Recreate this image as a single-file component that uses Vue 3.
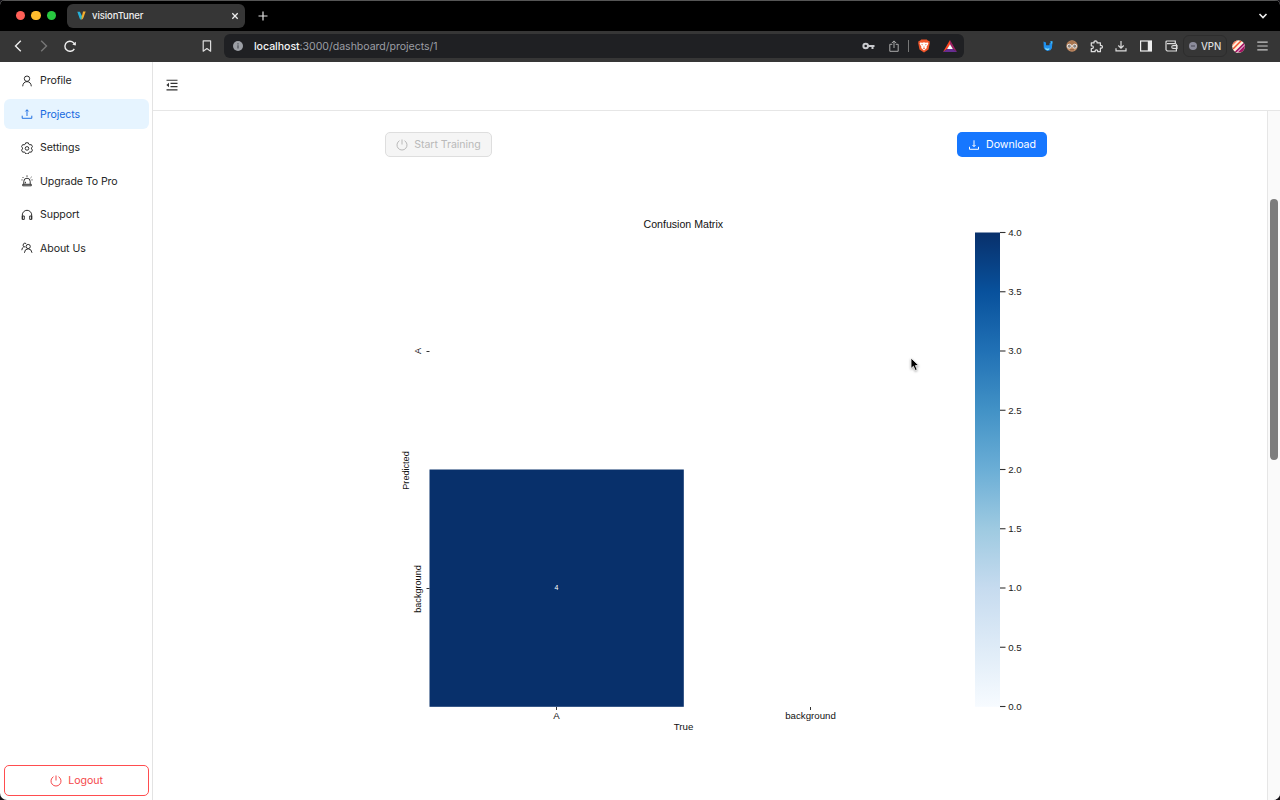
<script setup>
const menu = [
  { label: 'Profile', icon: 'user' },
  { label: 'Projects', icon: 'upload', active: true },
  { label: 'Settings', icon: 'gear' },
  { label: 'Upgrade To Pro', icon: 'alert' },
  { label: 'Support', icon: 'headset' },
  { label: 'About Us', icon: 'team' },
]
const ticks = Array.from({ length: 9 }, (_, i) => ({
  label: (4 - i * 0.5).toFixed(1),
  y: 232.5 + i * 59.25,
}))
const blues = ['#08306b', '#08519c', '#2171b5', '#4292c6', '#6baed6', '#9ecae1', '#c6dbef', '#deebf7', '#f7fbff']
</script>

<template>
  <div class="window">
    <header class="tabs">
      <div class="lights"><i class="red"></i><i class="amber"></i><i class="green"></i></div>
      <div class="tab">
        <svg class="logo" width="9" height="9" viewBox="0 0 9 9"><path d="M.3.8h2.6L5 5.2 4.2 8.6Q3.2 8.8 2.7 7.5Z" fill="#25b0d8"/><path d="M6 .5h2.7L6.3 7Q5.6 8.6 4.2 8.6Z" fill="#f5ae2d"/><path d="M3.7 5.3 5 4.6l.3 2.2-1.1 1.8z" fill="#68b98a"/></svg>
        <span>visionTuner</span>
        <svg class="close" width="8" height="8" viewBox="0 0 8 8" stroke="#eee" stroke-width="1.3"><path d="m1.3 1.3 5.4 5.4m0-5.4L1.3 6.7"/></svg>
      </div>
      <svg class="plus" width="10" height="10" viewBox="0 0 10 10" stroke="#e4e4e4" stroke-width="1.2"><path d="M5 .5v9M.5 5h9"/></svg>
      <svg class="chev" width="10" height="8" viewBox="0 0 10 8" fill="none" stroke="#eee" stroke-width="1.6"><path d="m1.5 2 3.5 3.5L8.5 2"/></svg>
    </header>

    <nav class="toolbar">
      <div class="history">
        <svg width="8" height="12" viewBox="0 0 8 12" fill="none" stroke="#eee" stroke-width="1.4"><path d="M6.8.8 1.5 6l5.3 5.2"/></svg>
        <svg width="8" height="12" viewBox="0 0 8 12" fill="none" stroke="#777" stroke-width="1.4"><path d="M1.2.8 6.5 6l-5.3 5.2"/></svg>
        <svg width="12" height="12" viewBox="0 0 12 12" fill="none" stroke="#eee" stroke-width="1.4"><path d="M10.3 8.8A5 5 0 1 1 10.8 5"/><path d="m8.3 4.5 3.5.9.1-3.7z" fill="#eee" stroke="none"/></svg>
      </div>
      <svg class="mark" width="10" height="12" viewBox="0 0 10 12" fill="none" stroke="#ddd" stroke-width="1.2" stroke-linejoin="round"><path d="M1.2.8h7.4v10.4L4.9 8.6l-3.7 2.6z"/></svg>
      <div class="address">
        <svg class="info" width="10" height="10" viewBox="0 0 10 10"><circle cx="5" cy="5" r="5" fill="#9c9fa5"/><path d="M5 4.3v3.2M5 2.3v1.2" stroke="#4b4e55" stroke-width="1.2"/></svg>
        <span class="url"><b>localhost</b>:3000/dashboard/projects/1</span>
        <div class="site">
          <svg width="13" height="8" viewBox="0 0 13 8" fill="none" stroke="#c9cace"><circle cx="3.7" cy="4" r="2.3" stroke-width="2"/><path d="M6 4h6.5M10.5 4v3" stroke-width="2"/></svg>
          <svg width="10" height="12" viewBox="0 0 10 12" fill="none" stroke="#aaa" stroke-width="1"><path d="M3.3 4.3H.8v7h8.4v-7H6.7M5 8V1M2.8 3.1 5 .9l2.2 2.2"/></svg>
          <i class="bar"></i>
          <svg width="12" height="14" viewBox="0 0 12 14"><path d="m3.2.6 5.6 0 1.2 1.2 1.4.3.4 2-1.3 6.4L6 13.6l-4.5-3.1L.2 4.1l.4-2L2 1.8z" fill="#f1562b"/><path d="m2.2 3.4 2.2.3L6 3.2l1.6.5 2.2-.3.6 1.3-1.8 3 .2 1.4L6 11.5 3.2 9.1l.2-1.4-1.8-3z" fill="#fff"/><path d="m3.2 5 1.8.6-.7 1zm5.6 0L7 5.6l.7 1zM6 6.5l.5 2-.5.5-.5-.5zM4.8 9.3 6 9l1.2.3L6 10.2z" fill="#f1562b"/></svg>
          <svg width="14" height="12" viewBox="0 0 14 12"><path d="M7 0v4.5L4.2 9 0 12z" fill="#ff4725"/><path d="m7 0 7 12-4-3-3-4.5z" fill="#9e1f63"/><path d="m0 12 4.2-3H10l4 3z" fill="#662d91"/><path d="m7 4.2 2.9 4.9H4.1z" fill="#fff"/></svg>
        </div>
      </div>
      <div class="extensions">
        <svg width="12" height="12" viewBox="0 0 12 12"><path d="m1.5 1.5 2.5 1v2.7h3.5V3.2l1-.2V1l2 .3-.6 6.9-1.5 2.1-3 .8-2.4-1.3L1.8 8z" fill="#1f91ee"/><path d="M3.2 7.5 5 8.7l2.5-.4L7 9.7l-2 .5-1.5-.9z" fill="#8ce1f7"/><path d="m8.5 1.4 1.9.1-.3 3z" fill="#49c3fa"/></svg>
        <svg width="12" height="12" viewBox="0 0 12 12"><circle cx="6" cy="6" r="5.7" fill="#c58e65"/><path d="M.8 3.6Q6-2 11.2 3.6L9.5 4.5H2.3z" fill="#a8754f"/><g fill="#8a8078" stroke="#eee" stroke-width=".9"><circle cx="3.3" cy="6.2" r="2"/><circle cx="8.7" cy="6.2" r="2"/></g><path d="M5.3 6h1.4" stroke="#eee"/><path d="M4 9.8h4" stroke="#8a5a3c"/></svg>
        <svg width="13" height="13" viewBox="0 0 13 13" fill="none" stroke="#ddd" stroke-width="1.25" stroke-linejoin="round"><path d="M1.3 2.8h2.8Q3.7.9 5.5.8 7.3.9 7 2.8h3.4v2.7q2-.3 2 1.3t-2 1.3v3.6H7.7q.2-1.8-1.3-1.8t-1.3 1.8H1.3V8.6q2 .2 2-1.4T1.3 5.8z"/></svg>
        <svg width="12" height="12" viewBox="0 0 12 12" fill="none" stroke="#ddd" stroke-width="1.2"><path d="M6 1v7M3.3 5.5 6 8.2l2.7-2.7M1 8.3v2.5h10V8.3"/></svg>
        <svg width="12" height="12" viewBox="0 0 12 12"><rect x=".6" y="1" width="10.8" height="10" fill="none" stroke="#eee" stroke-width="1.2"/><path d="M7.8 1H11v10H7.8z" fill="#eee"/></svg>
        <svg width="13" height="12" viewBox="0 0 13 12" fill="none" stroke="#ddd" stroke-width="1.2"><path d="M11.4 3.7V11H2.2L1 9.8V2q0-1 1-1h8.3v2.7H2"/><path d="M12 5.5H8.2q-1.4 0-1.4 1.5t1.4 1.5H12z"/><path d="M8.4 7h1"/></svg>
        <span class="vpn"><svg width="8" height="8" viewBox="0 0 8 8"><circle cx="4" cy="4" r="4" fill="#8c8c9b"/><path d="M2 4h4" stroke="#555562" stroke-width="1.3"/></svg>VPN</span>
        <svg width="13" height="13" viewBox="0 0 13 13"><defs><clipPath id="disc"><circle cx="6.5" cy="6.5" r="6.3"/></clipPath></defs><g clip-path="url(#disc)"><path d="M0 0h13v13H0z" fill="#fff0dc"/><path d="M-1 7 7-1H0z" fill="#ff7658"/><path d="m1 9 9-9" stroke="#f2532d" stroke-width="1.5"/><path d="m2.5 12 11-11v12z" fill="#a51364"/><path d="m4.5 13 9-9" stroke="#fff" stroke-width="1"/></g></svg>
        <svg width="11" height="10" viewBox="0 0 11 10" stroke="#c8c8c8" stroke-width="1.2"><path d="M.3 1.2h10.4M.3 5h10.4M.3 8.8h10.4"/></svg>
      </div>
    </nav>

    <div class="app">
      <aside>
        <ul>
          <li v-for="m in menu" :key="m.label" :class="{ active: m.active }">
            <svg width="12" height="12" viewBox="0 0 12 12" fill="none" stroke="currentColor" stroke-width=".95">
              <template v-if="m.icon === 'user'"><circle cx="6" cy="3.7" r="2.7"/><path d="M1.7 11.3Q2 6.9 6 6.6q4 .3 4.3 4.7"/></template>
              <path v-else-if="m.icon === 'upload'" d="M1.2 7.7v2.6h9.6V7.7M6 8V2M4.5 3.4 6 1.7l1.5 1.7"/>
              <template v-else-if="m.icon === 'gear'"><path d="M4.7.8h2.6l.5 1.4 1 .6 1.5-.2 1.2 2.1-1 1.2v1l1 1.2-1.2 2.1-1.5-.2-1 .6-.5 1.3H4.7l-.5-1.3-1-.6-1.5.2L.5 8.1l1-1.2v-1l-1-1.2 1.2-2.1 1.5.2 1-.6z"/><circle cx="6" cy="6.4" r="1.8"/></template>
              <path v-else-if="m.icon === 'alert'" d="M1.7 10.8h8.6V9.3H1.7zM2.8 9.2V6.4a3.2 3.2 0 0 1 6.4 0v2.8M6 .4v1.4M1.5 2l.9.9M10.5 2l-.9.9M.5 4.9h1M10.5 4.9h1M4.4 8.4V6.8"/>
              <path v-else-if="m.icon === 'headset'" d="M1.3 10.4V6a4.7 4.7 0 0 1 9.4 0v4.4M1.3 7h2v3.4h-2zM8.7 7h2v3.4h-2z"/>
              <template v-else><circle cx="7.2" cy="4.5" r="2.1"/><path d="M3.4 10.8q.2-3.8 3.8-4 3.4.2 3.8 4M5.2 1.6q-1.5-1-2.6.1-1.2 1.6.2 3Q1 5.5.8 8.2M2.8 4.5l1.5.7"/></template>
            </svg>
            {{ m.label }}
          </li>
        </ul>
        <button class="logout">
          <svg width="12" height="12" viewBox="0 0 12 12" fill="none" stroke="currentColor"><path d="M3.5 1.7a5 5 0 1 0 5 0M6 .5v5"/></svg>Logout
        </button>
      </aside>

      <main>
        <div class="topbar">
          <svg width="12" height="12" viewBox="0 0 12 12" stroke="#333" stroke-width="1.15"><path d="M.5 1.2h11M4.5 4.4h7M4.5 7.6h7M.5 10.8h11"/><path d="M3 3.7v4.6L.4 6z" fill="#333" stroke="none"/></svg>
        </div>
        <div class="scroller">
          <div class="content">
            <div class="actions">
              <button class="start"><svg width="12" height="12" viewBox="0 0 12 12" fill="none" stroke="currentColor"><path d="M3.5 1.7a5 5 0 1 0 5 0M6 .5v5"/></svg>Start Training</button>
              <button class="download"><svg width="12" height="12" viewBox="0 0 12 12" fill="none" stroke="currentColor" stroke-width="1"><path d="M1.5 7.8v2.5h9V7.8M6 1.3v6.2M4.5 6 6 7.6 7.5 6"/></svg>Download</button>
            </div>
            <svg class="chart" width="662" height="544" viewBox="385 200 662 544">
              <defs>
                <linearGradient id="blues" x1="0" y1="0" x2="0" y2="1">
                  <stop v-for="(c, i) in blues" :key="c" :offset="i / 8" :stop-color="c" />
                </linearGradient>
              </defs>
              <text class="title" x="683.3" y="227.6" text-anchor="middle">Confusion Matrix</text>
              <rect x="429.5" y="469.5" width="254.3" height="237.3" fill="#08306b" />
              <text class="value" x="556.5" y="590" text-anchor="middle">4</text>
              <path d="M426.5 351.5h3M426.5 588.5h3M556.5 707v3M810.5 707v3" stroke="#333" />
              <g class="label side" text-anchor="middle">
                <text transform="translate(421 351) rotate(-90)">A</text>
                <text transform="translate(409.4 470.5) rotate(-90)">Predicted</text>
                <text transform="translate(421.4 589) rotate(-90)">background</text>
              </g>
              <g class="label" text-anchor="middle">
                <text x="556.5" y="719.2">A</text>
                <text x="810.5" y="719.2">background</text>
                <text x="683.5" y="730.4">True</text>
              </g>
              <rect x="975" y="232.5" width="25" height="474.3" fill="url(#blues)" />
              <g v-for="t in ticks" :key="t.label" class="tick">
                <path :d="`M1000 ${t.y}h5.5`" stroke="#333" stroke-width="1.1" />
                <text x="1008.2" :y="t.y + 3.4">{{ t.label }}</text>
              </g>
            </svg>
          </div>
          <div class="scrollbar"><i></i></div>
        </div>
      </main>
    </div>
    <svg class="cursor" width="10" height="16" viewBox="0 0 10 16"><path d="M1 1v10.5l2.4-2.2 1.8 4.2 2-.9-1.8-4h3.4z" fill="#000" stroke="#fff" stroke-width=".8"/></svg>
  </div>
</template>

<style>
body { margin: 0; background: #151318; }
</style>

<style scoped>
* { box-sizing: border-box; }
svg { display: block; flex: none; }
.window { position: relative; width: 1280px; height: 800px; overflow: hidden; display: flex; flex-direction: column; background: #fff; border-radius: 5px 5px 7px 7px; font-family: Inter, "Liberation Sans", sans-serif; }
.tabs { height: 31px; background: #000; border-top: 1px solid #555; display: flex; align-items: center; flex: none; padding: 0 12px 1px 16px; }
.lights { display: flex; gap: 6px; width: 50.5px; }
.lights i { width: 9.4px; height: 9.4px; border-radius: 50%; }
.red { background: #ff5f57; }
.amber { background: #febc2e; }
.green { background: #28c840; }
.tab { width: 178.5px; height: 24px; border-radius: 6px; background: #363636; color: #eee; font-size: 9.5px; font-weight: 500; letter-spacing: -.08px; display: flex; align-items: center; padding: 0 6px 0 10px; }
.logo { margin-right: 6.5px; }
.close { margin-left: auto; }
.plus { margin-left: 13px; }
.chev { margin-left: auto; }
.toolbar { height: 31px; flex: none; background: #363636; display: flex; align-items: center; padding: 0 12px 1px 14px; }
.history { display: flex; align-items: center; gap: 18px; width: 188px; }
.history svg:last-child { margin-left: -2px; }
.mark { margin-right: 12px; }
.address { width: 740px; height: 24px; border-radius: 6px; background: #1f2023; display: flex; align-items: center; padding: 0 7px 0 9px; font-size: 10.6px; letter-spacing: -.05px; color: #9b9ea4; }
.info { margin-right: 11px; }
.url b { font-weight: 500; color: #f4f4f4; }
.site { margin-left: auto; display: flex; align-items: center; }
.site svg:nth-child(2) { margin-left: 14px; }
.bar { width: 1px; height: 12px; background: #777; margin: 0 9px; }
.site svg:last-child { margin-left: 13px; }
.extensions { margin-left: auto; display: flex; align-items: center; gap: 12.3px; }
.extensions > svg:nth-child(2), .extensions > svg:nth-child(3), .extensions > svg:nth-child(4) { position: relative; left: -1px; }
.vpn { height: 22px; margin: 0 -8px 0 -7px; padding: 0 5px; border-radius: 6px; border: 1px solid #2d2d2d; color: #ddd; font-size: 9.7px; font-weight: 500; display: flex; align-items: center; gap: 4px; }
.app { flex: 1; min-height: 0; display: flex; }
aside { width: 153px; border-right: 1px solid #e3e3e3; display: flex; flex-direction: column; justify-content: space-between; padding: 3.4px 3px 4px 3.5px; }
ul { list-style: none; margin: 0; padding: 0; display: flex; flex-direction: column; gap: 3.5px; }
li { height: 30px; display: flex; align-items: center; gap: 7px; padding: .6px 0 0 17.5px; border-radius: 6px; color: #262626; font-size: 10.6px; letter-spacing: -.08px; }
li.active { background: #e6f4ff; color: #1769e0; }
button { font-family: inherit; font-size: 10.6px; letter-spacing: -.05px; display: flex; align-items: center; justify-content: center; gap: 6px; border-radius: 5px; padding: 0; }
.logout { height: 31px; margin-left: .5px; background: #fff; border: 1px solid #ff4d4f; color: #f5484b; }
main { flex: 1; display: flex; flex-direction: column; min-width: 0; }
.topbar { height: 49px; border-bottom: 1px solid #e6e6e6; display: flex; align-items: center; padding: 0 0 2px 13px; flex: none; }
.scroller { flex: 1; display: flex; min-height: 0; }
.content { flex: 1; padding: 21px 220px 0 232px; }
.actions { display: flex; justify-content: space-between; height: 25px; margin-bottom: 43px; }
.start { width: 107px; height: 25px; background: #f5f5f5; border: 1px solid #dedede; color: #b9b9b9; }
.download { width: 90px; height: 25px; background: #1677ff; border: 0; color: #fff; }
.chart { font-family: "Liberation Sans", Arial, sans-serif; fill: #222; }
.title { font-size: 10.6px; fill: #111; }
.label { font-size: 9.7px; fill: #111; }
.side { font-size: 9.1px; }
.value { font-size: 7px; fill: #fff; }
.tick { font-size: 9.7px; }
.scrollbar { width: 13px; border-left: 1px solid #e6e6e6; background: #fafafa; display: flex; justify-content: center; padding-top: 88px; }
.scrollbar i { width: 8px; height: 261px; border-radius: 4px; background: #7d7d7d; }
.cursor { position: absolute; left: 910px; top: 357px; filter: drop-shadow(0 1px 1px rgba(0, 0, 0, .35)); }
</style>
